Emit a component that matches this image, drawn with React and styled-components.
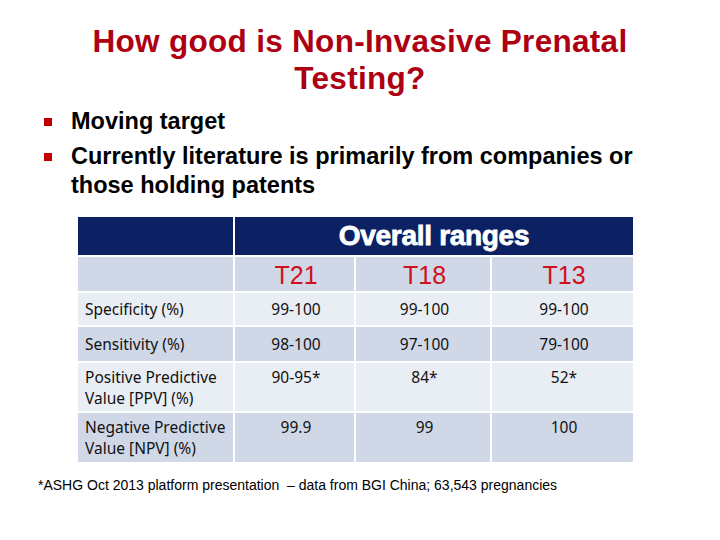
import React from 'react';
import styled, { createGlobalStyle } from 'styled-components';

const GlobalStyle = createGlobalStyle`
  html, body {
    margin: 0;
    padding: 0;
    background: #ffffff;
  }
`;

const Slide = styled.div`
  width: 720px;
  height: 540px;
  box-sizing: border-box;
  padding-top: 23px;
  font-family: 'Liberation Sans', Arial, sans-serif;
  overflow: hidden;
`;

const Title = styled.h1`
  margin: 0;
  text-align: center;
  font-size: 31.5px;
  line-height: 37px;
  font-weight: bold;
  color: #ad0012;
  letter-spacing: 0.3px;
`;

const Bullets = styled.ul`
  list-style: none;
  margin: 10px 0 0;
  padding: 0 40px 0 44px;
`;

const Bullet = styled.li`
  display: flex;
  align-items: flex-start;
  font-size: 23.5px;
  font-weight: bold;
  line-height: 29px;
  color: #000;
  margin-bottom: 6px;

  &::before {
    content: '';
    flex: none;
    width: 8px;
    height: 8px;
    margin-top: 11px;
    margin-right: 19px;
    background: #c00000;
  }
`;

const Table = styled.div`
  display: grid;
  grid-template-columns: 155px 119px 134px 141px;
  grid-template-rows: 38px 34px 32px 34px 48px 49px;
  gap: 2px;
  margin: 17px 0 0 78px;
  width: 555px;
  font-family: 'Noto Sans', 'Open Sans', sans-serif;
`;

const HeadCell = styled.div`
  background: #0b2164;
  color: #fff;
  grid-column: ${(p) => p.span || 'auto'};
  display: flex;
  align-items: center;
  justify-content: center;
  font-family: 'Liberation Sans', Arial, sans-serif;
  font-weight: 900;
  font-size: 28px;
  letter-spacing: -0.3px;
  -webkit-text-stroke: 0.8px #fff;
`;

const Cell = styled.div`
  background: ${(p) => (p.dark ? '#d0d8e8' : '#e9edf4')};
  display: flex;
  align-items: ${(p) => (p.tall ? 'flex-start' : 'center')};
  justify-content: ${(p) => (p.label ? 'flex-start' : 'center')};
  padding: ${(p) => (p.tall ? '4px 4px 0 7px' : '0 4px 0 7px')};
  font-size: 15.5px;
  line-height: 21px;
  color: #111;
`;

const ColHead = styled(Cell)`
  font-family: 'Liberation Sans', Arial, sans-serif;
  font-size: 25px;
  color: #d0101a;
  padding-top: 2px;
`;

const Footnote = styled.p`
  margin: 15px 0 0 38px;
  font-size: 14px;
  color: #000;
`;

const rows = [
  { label: 'Specificity (%)', values: ['99-100', '99-100', '99-100'] },
  { label: 'Sensitivity (%)', values: ['98-100', '97-100', '79-100'] },
  { label: 'Positive Predictive Value [PPV] (%)', values: ['90-95*', '84*', '52*'], tall: true },
  { label: 'Negative Predictive Value [NPV] (%)', values: ['99.9', '99', '100'], tall: true },
];

export default function App() {
  return (
    <Slide>
      <GlobalStyle />
      <Title>
        How good is Non-Invasive Prenatal
        <br />
        Testing?
      </Title>
      <Bullets>
        <Bullet>Moving target</Bullet>
        <Bullet>Currently literature is primarily from companies or those holding patents</Bullet>
      </Bullets>
      <Table>
        <HeadCell />
        <HeadCell span="span 3">Overall ranges</HeadCell>
        <Cell dark />
        <ColHead dark>T21</ColHead>
        <ColHead dark>T18</ColHead>
        <ColHead dark>T13</ColHead>
        {rows.map((r, i) => {
          const dark = i % 2 === 1;
          return (
            <React.Fragment key={r.label}>
              <Cell label dark={dark} tall={r.tall}>{r.label}</Cell>
              {r.values.map((v, j) => (
                <Cell key={j} dark={dark} tall={r.tall}>{v}</Cell>
              ))}
            </React.Fragment>
          );
        })}
      </Table>
      <Footnote>*ASHG Oct 2013 platform presentation&nbsp; – data from BGI China; 63,543 pregnancies</Footnote>
    </Slide>
  );
}
